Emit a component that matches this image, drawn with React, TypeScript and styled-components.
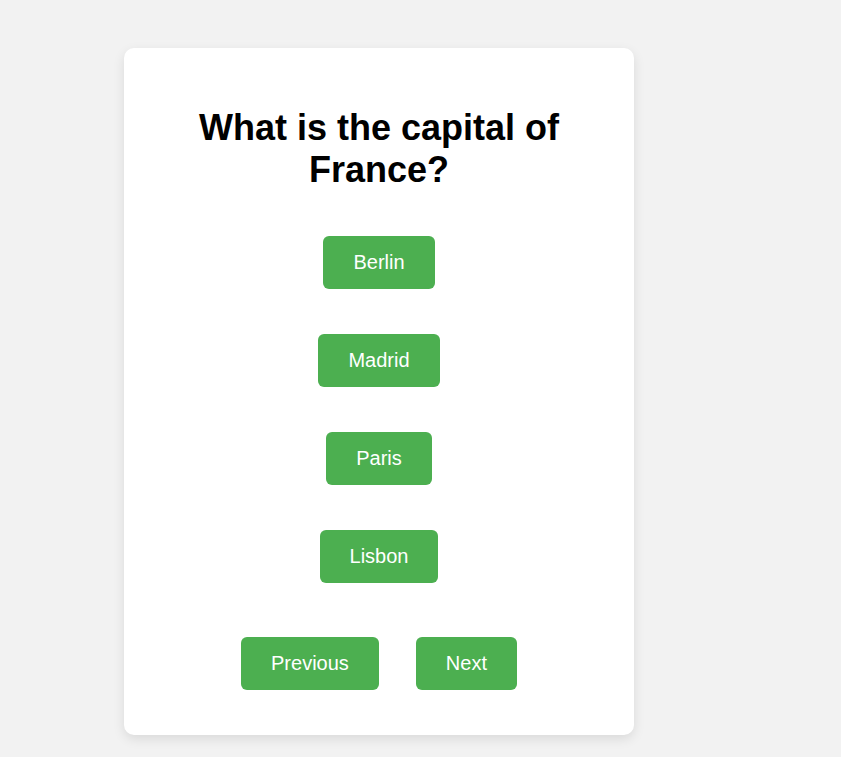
import React from "react";
import styled, { createGlobalStyle } from "styled-components";

const GlobalStyle = createGlobalStyle`
  html, body {
    margin: 0;
    padding: 0;
    background: #f2f2f2;
    font-family: "Liberation Sans", Arial, sans-serif;
  }
`;

const Page = styled.div`
  padding: 48px 0 22px 124px;
`;

const Card = styled.div`
  width: 510px;
  box-sizing: border-box;
  background: #ffffff;
  border-radius: 10px;
  box-shadow: 0 4px 12px rgba(0, 0, 0, 0.1);
  padding: 59px 40px 45px;
  display: flex;
  flex-direction: column;
  align-items: center;
`;

const Question = styled.h2`
  margin: 0 0 45px;
  font-size: 36px;
  font-weight: bold;
  line-height: normal;
  color: #000;
  text-align: center;
`;

const Options = styled.div`
  display: flex;
  flex-direction: column;
  align-items: center;
  gap: 45px;
`;

const Button = styled.button`
  font-family: "Liberation Sans", Arial, sans-serif;
  font-size: 20px;
  line-height: 23px;
  padding: 15px 30px;
  background: #4caf50;
  color: #ffffff;
  border: none;
  border-radius: 6px;
  cursor: pointer;
`;

const Nav = styled.div`
  margin-top: 54px;
  display: flex;
  justify-content: center;
  gap: 37px;
`;

const options = ["Berlin", "Madrid", "Paris", "Lisbon"];

export default function App() {
  return (
    <>
      <GlobalStyle />
      <Page>
        <Card>
          <Question>
            What is the capital of
            <br />
            France?
          </Question>
          <Options>
            {options.map((o) => (
              <Button key={o}>{o}</Button>
            ))}
          </Options>
          <Nav>
            <Button>Previous</Button>
            <Button>Next</Button>
          </Nav>
        </Card>
      </Page>
    </>
  );
}
